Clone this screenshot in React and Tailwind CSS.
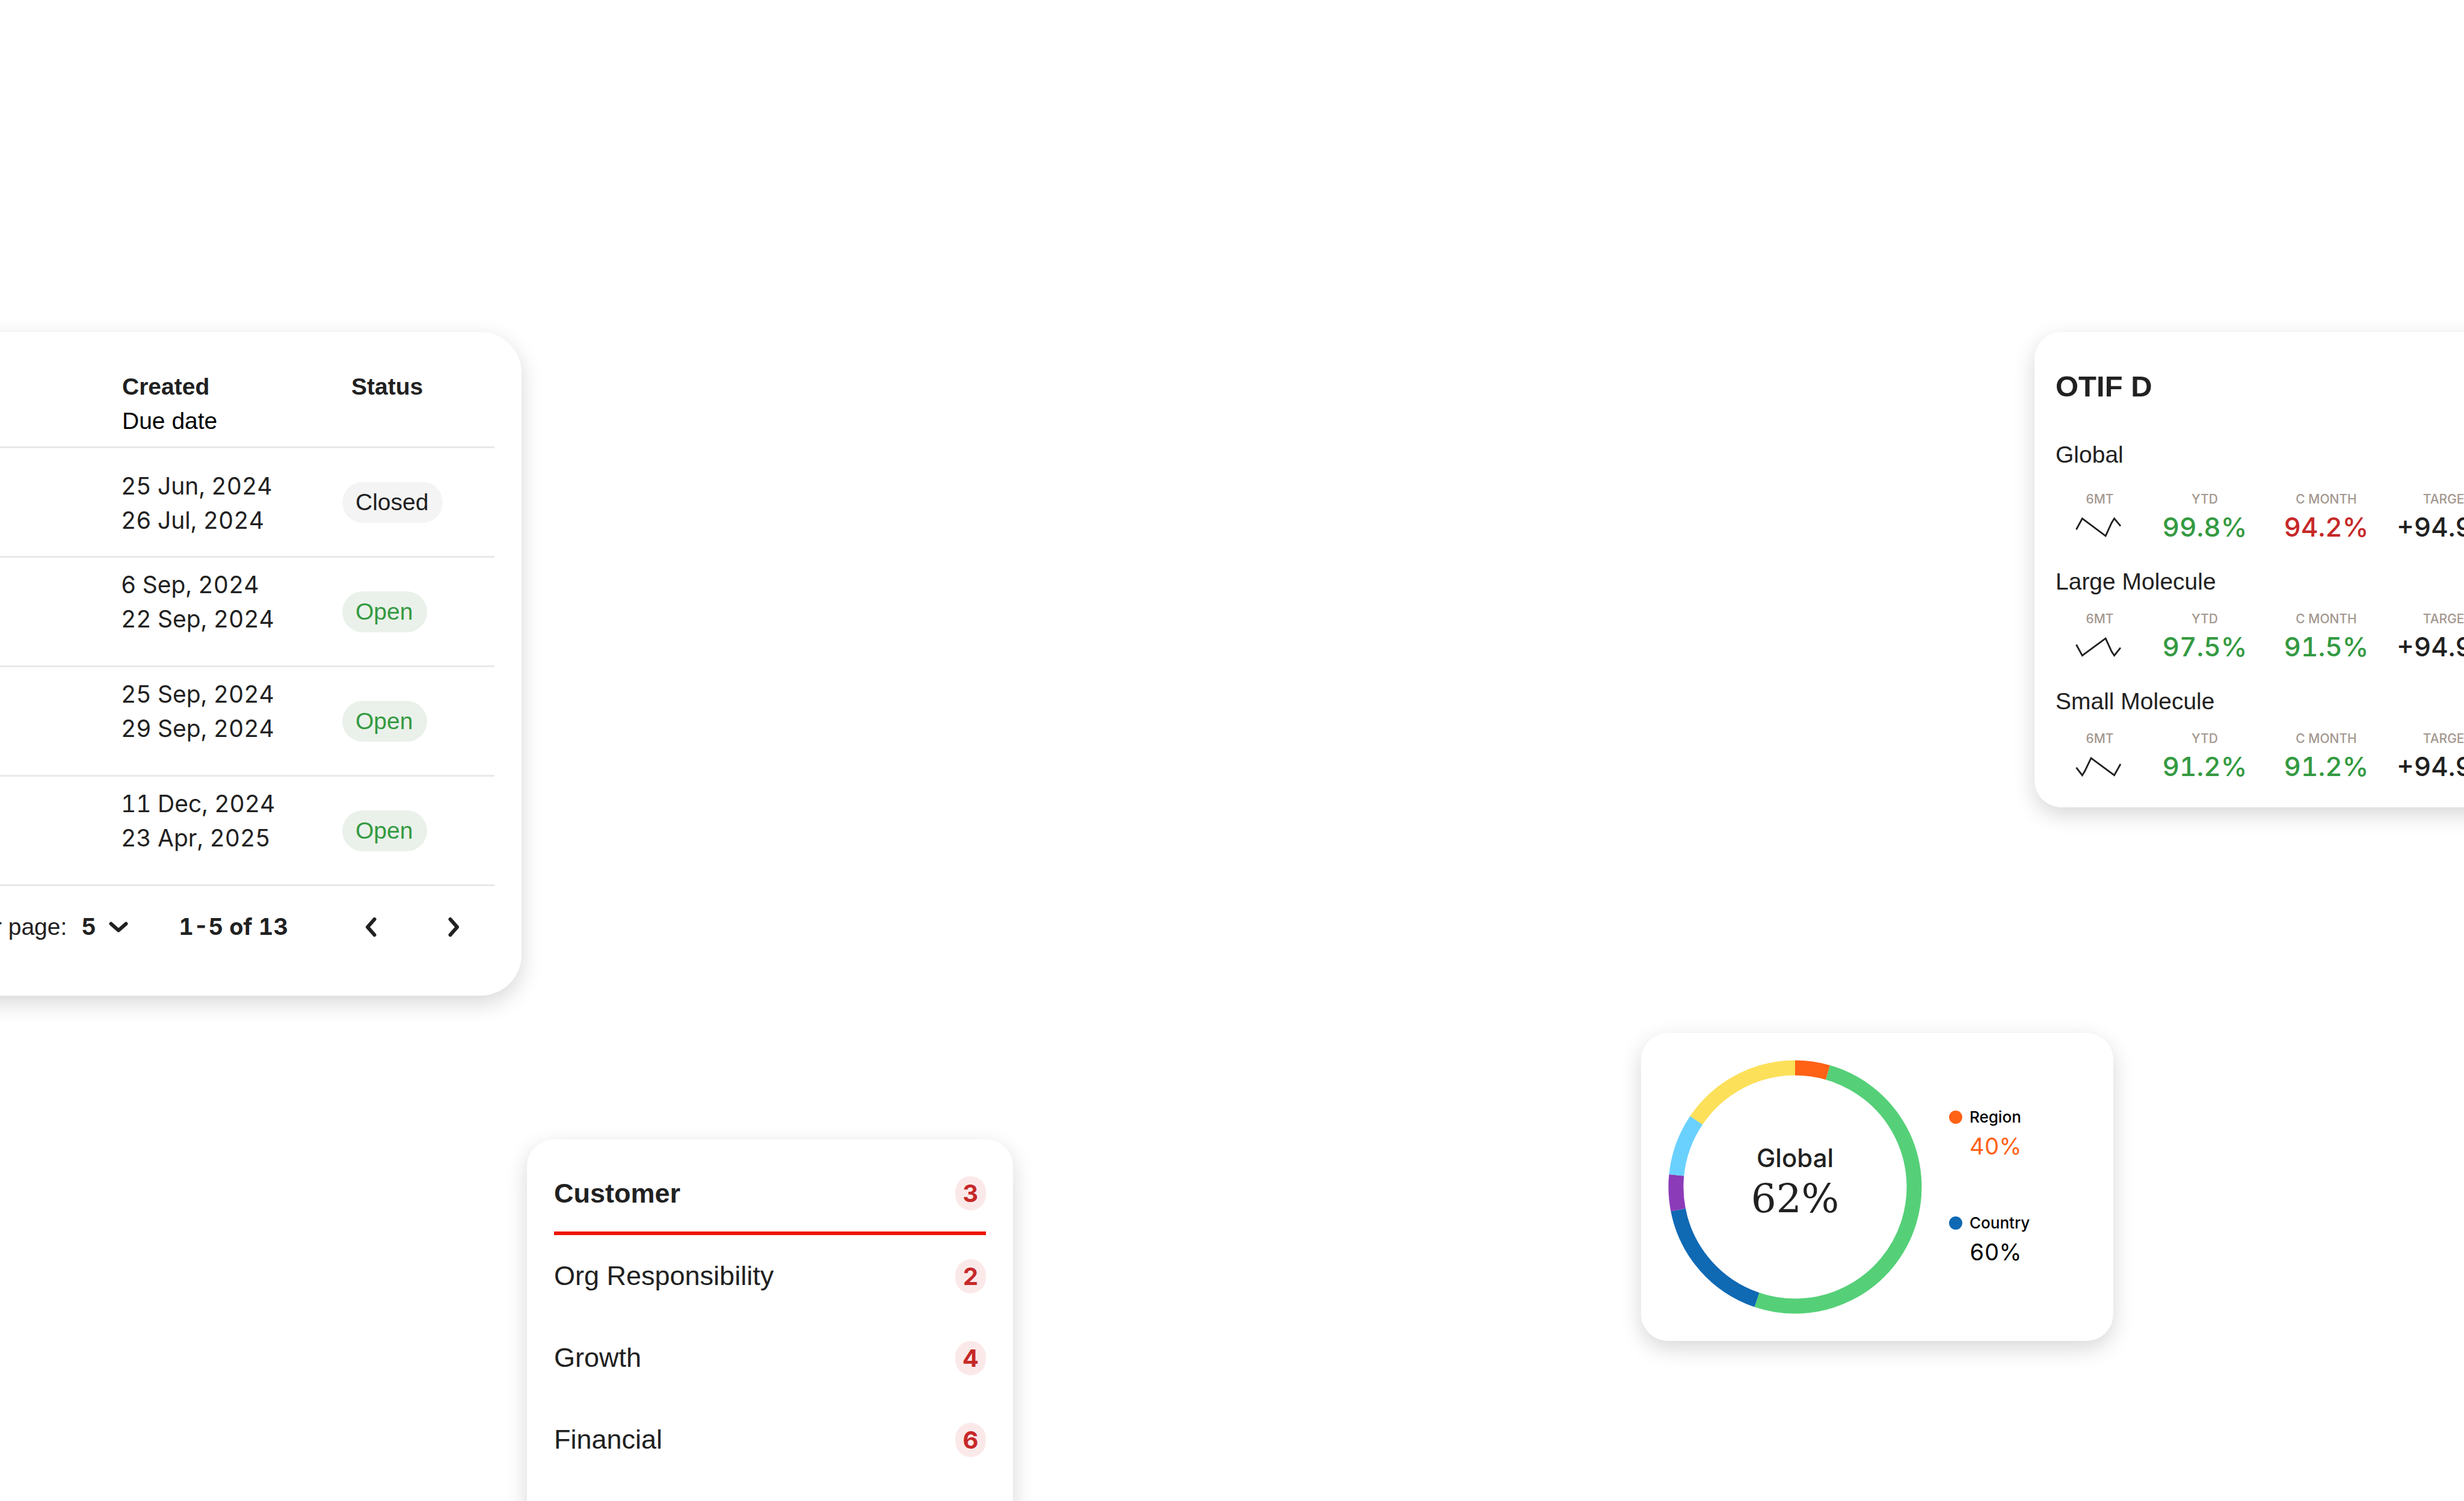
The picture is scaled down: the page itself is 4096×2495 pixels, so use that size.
const SANS = "font-['Liberation_Sans',Arial,sans-serif]";
const NUM = "font-['Inter',sans-serif] tabular-nums";
const CARD = "bg-white shadow-[0_12px_36px_rgba(0,0,0,0.16)]";

const actions = [
  { created: "25 Jun, 2024", due: "26 Jul, 2024", status: "Closed" },
  { created: "6 Sep, 2024", due: "22 Sep, 2024", status: "Open" },
  { created: "25 Sep, 2024", due: "29 Sep, 2024", status: "Open" },
  { created: "11 Dec, 2024", due: "23 Apr, 2025", status: "Open" },
];

const categories = [
  { name: "Customer", count: 3, active: true },
  { name: "Org Responsibility", count: 2 },
  { name: "Growth", count: 4 },
  { name: "Financial", count: 6 },
];

const metrics = [
  {
    name: "Global",
    points: "6,90 48,12 212,135 254,43 273,12 317,65",
    ytd: "99.8%",
    month: "94.2%",
    monthDown: true,
    target: "+94.9%",
  },
  {
    name: "Large Molecule",
    points: "6,57 48,134 212,13 254,105 273,134 317,79",
    ytd: "97.5%",
    month: "91.5%",
    target: "+94.9%",
  },
  {
    name: "Small Molecule",
    points: "6,80 48,134 67,103 110,13 273,134 317,55",
    ytd: "91.2%",
    month: "91.2%",
    target: "+94.9%",
  },
];

const segments = [
  { from: 0, to: 16, color: "#ff6115" },
  { from: 16, to: 198.7, color: "#55d078" },
  { from: 198.7, to: 258.9, color: "#0f69b3" },
  { from: 258.9, to: 275.7, color: "#8c3bb8" },
  { from: 275.7, to: 304, color: "#6ad1ff" },
  { from: 304, to: 360, color: "#fce05a" },
];

function arc(from, to) {
  const point = (deg) => {
    const a = ((deg - 90) * Math.PI) / 180;
    return `${211 + 198 * Math.cos(a)} ${211 + 198 * Math.sin(a)}`;
  };
  return `M${point(from)}A198 198 0 ${to - from > 180 ? 1 : 0} 1 ${point(to)}`;
}

function Chevron({ className, width, height, points }) {
  return (
    <svg
      aria-hidden="true"
      className={className}
      width={width}
      height={height}
      viewBox={`0 0 ${width} ${height}`}
      fill="none"
      stroke="currentColor"
      strokeWidth="6"
      strokeLinecap="round"
      strokeLinejoin="round"
    >
      <polyline points={points} />
    </svg>
  );
}

function StatusPill({ status }) {
  const tone = status === "Open" ? "bg-[#eaf1ea] text-[#349a41]" : "bg-[#f4f4f4] text-[#212121]";
  return <span className={`inline-block rounded-full pr-6 pl-[22px] leading-[68px] ${tone}`}>{status}</span>;
}

function ActionsCard() {
  return (
    <section
      aria-label="Actions"
      className={`-ml-[233px] w-[1100px] shrink-0 rounded-[68px] px-[45px] text-[39px] text-[#212121] ${CARD}`}
    >
      <table className="w-full table-fixed border-separate border-spacing-0 text-left">
        <colgroup>
          <col />
          <col className="w-[368px]" />
          <col className="w-[253px]" />
        </colgroup>
        <thead>
          <tr className="h-[193px] align-top leading-[57px]">
            <td className="border-b-3 border-[#e8e8e8]" />
            <th scope="col" className="border-b-3 border-[#e8e8e8] pt-[62px] pl-0.5 font-bold">
              Created
              <span className="block font-normal text-black">Due date</span>
            </th>
            <th scope="col" className="border-b-3 border-[#e8e8e8] pt-[62px] pl-[15px] font-bold">
              Status
            </th>
          </tr>
        </thead>
        <tbody>
          {actions.map((row, i) => (
            <tr key={row.created} className="h-[182px]">
              <td className="border-b-3 border-[#e8e8e8]" />
              <td
                className={`border-b-3 border-[#e8e8e8] align-top leading-[57px] ${NUM} ${
                  i === 0 ? "pt-[34px]" : "pt-4"
                }`}
              >
                <div>{row.created}</div>
                <div>{row.due}</div>
              </td>
              <td className="border-b-3 border-[#e8e8e8] align-middle">
                <StatusPill status={row.status} />
              </td>
            </tr>
          ))}
        </tbody>
      </table>
      <div className="flex items-center justify-end pt-[39px] pr-[39px] pb-[86px] leading-[57px] whitespace-nowrap">
        <label htmlFor="page-size">Rows per page:</label>
        <div className="relative ml-6">
          <select
            id="page-size"
            defaultValue="5"
            className={`block h-[57px] w-[78px] appearance-none bg-transparent text-[38px] font-bold ${NUM}`}
          >
            <option>5</option>
            <option>10</option>
          </select>
          <Chevron
            className="pointer-events-none absolute top-[20px] right-0"
            width={32}
            height={18}
            points="3.5,3.5 16,14.5 28.5,3.5"
          />
        </div>
        <div className={`ml-[84px] text-[38px] font-bold ${NUM}`}>1-5 of 13</div>
        <button
          type="button"
          aria-label="Previous page"
          className="ml-[109px] flex size-[57px] items-center justify-center"
        >
          <Chevron width={19} height={34} points="15.5,4 4,17 15.5,30" />
        </button>
        <button
          type="button"
          aria-label="Next page"
          className="ml-[81px] flex size-[57px] items-center justify-center"
        >
          <Chevron width={19} height={34} points="3.5,4 15,17 3.5,30" />
        </button>
      </div>
    </section>
  );
}

function MetricTable({ metric }) {
  const first = metric.name === "Global";
  return (
    <table className="w-full table-fixed text-center">
      <caption
        className={`text-left text-[39px] leading-[48px] whitespace-nowrap ${first ? "pb-[38px]" : "pb-[26px]"}`}
      >
        {metric.name}
      </caption>
      <colgroup>
        <col className="w-[147px]" />
        <col className="w-[202px]" />
        <col className="w-[202px]" />
        <col className="w-[202px]" />
      </colgroup>
      <thead>
        <tr className="font-['Inter',sans-serif] text-[21px] leading-[24px] text-[#a3978f]">
          <th scope="col" className="pb-[6px] font-medium">6MT</th>
          <th scope="col" className="pb-[6px] font-medium">YTD</th>
          <th scope="col" className="pb-[6px] font-medium">C MONTH</th>
          <th scope="col" className="pb-[6px] font-medium">TARGET</th>
        </tr>
      </thead>
      <tbody>
        <tr className={`text-[44px] leading-[56px] font-medium ${NUM}`}>
          <td className="pr-1">
            <svg
              aria-label={`${metric.name} six month trend`}
              className="mx-auto"
              width="77"
              height="35"
              viewBox="0 0 325 148"
              fill="none"
              stroke="#212121"
              strokeWidth="12"
            >
              <polyline points={metric.points} />
            </svg>
          </td>
          <td className="text-[#349a41]">{metric.ytd}</td>
          <td className={metric.monthDown ? "text-[#c62828]" : "text-[#349a41]"}>{metric.month}</td>
          <td>{metric.target}</td>
        </tr>
      </tbody>
    </table>
  );
}

function OtifCard() {
  return (
    <section
      className={`-mr-[110px] w-[824px] shrink-0 rounded-[45px] pt-[58px] pr-9 pb-10 pl-[35px] text-[#212121] ${CARD}`}
    >
      <h2 className="mb-[58px] text-[49px] leading-[64px] font-bold">OTIF D</h2>
      <div className="flex flex-col gap-[39px]">
        {metrics.map((metric) => (
          <MetricTable key={metric.name} metric={metric} />
        ))}
      </div>
    </section>
  );
}

function CategoriesCard() {
  return (
    <section
      aria-label="Categories"
      className={`-mb-20 ml-[876px] mt-[239px] w-[808px] shrink-0 rounded-[45px] px-[45px] pt-[26px] text-[#212121] ${CARD}`}
    >
      {categories.map(({ name, count, active }) => (
        <button
          key={name}
          type="button"
          className={`flex w-full items-center justify-between text-left text-[45px] ${
            active ? "h-[133px] border-b-6 border-[#ee1500] font-bold" : "h-[136px]"
          }`}
        >
          <span>{name}</span>
          <span
            className={`w-[51px] rounded-full bg-[#fbe9ea] text-center text-[40px] leading-[57px] font-bold text-[#c62828] ${NUM}`}
          >
            {count}
          </span>
        </button>
      ))}
    </section>
  );
}

function LegendItem({ name, value, dot, tone }) {
  return (
    <div>
      <dt className="flex items-center gap-3 font-['Inter',sans-serif] text-[26px] leading-8 font-medium">
        <span className={`size-[22px] rounded-full ${dot}`} />
        {name}
      </dt>
      <dd className={`mt-2 pl-[34px] text-[38px] leading-[48px] ${NUM} ${tone}`}>{value}</dd>
    </div>
  );
}

function GlobalShareCard() {
  return (
    <section
      aria-label="Global share"
      className={`mt-[62px] ml-[1044px] flex w-[785px] shrink-0 items-center gap-[45px] self-start rounded-[45px] p-[45px] text-black ${CARD}`}
    >
      <div className="grid place-items-center">
        <svg
          role="img"
          aria-label="Share by segment"
          className="[grid-area:1/1]"
          width="422"
          height="422"
          viewBox="0 0 422 422"
          fill="none"
          strokeWidth="25"
        >
          {segments.map((s) => (
            <path key={s.from} d={arc(s.from, s.to)} stroke={s.color} />
          ))}
        </svg>
        <div className="pb-5 text-center text-[#212121] [grid-area:1/1]">
          <div className="font-['Inter',sans-serif] text-[42px] leading-[56px] font-medium">Global</div>
          <div className="mt-1 font-['DejaVu_Serif',serif] text-[66px] leading-[72px]">62%</div>
        </div>
      </div>
      <dl className="flex flex-col gap-[88px]">
        <LegendItem name="Region" value="40%" dot="bg-[#ff6115]" tone="text-[#ff6115]" />
        <LegendItem name="Country" value="60%" dot="bg-[#0f69b3]" tone="text-black" />
      </dl>
    </section>
  );
}

export default function App() {
  return (
    <main className={`flex h-screen flex-col overflow-hidden bg-white pt-[552px] ${SANS}`}>
      <div className="flex shrink-0 items-start justify-between">
        <ActionsCard />
        <OtifCard />
      </div>
      <div className="flex min-h-0 flex-1">
        <CategoriesCard />
        <GlobalShareCard />
      </div>
    </main>
  );
}
